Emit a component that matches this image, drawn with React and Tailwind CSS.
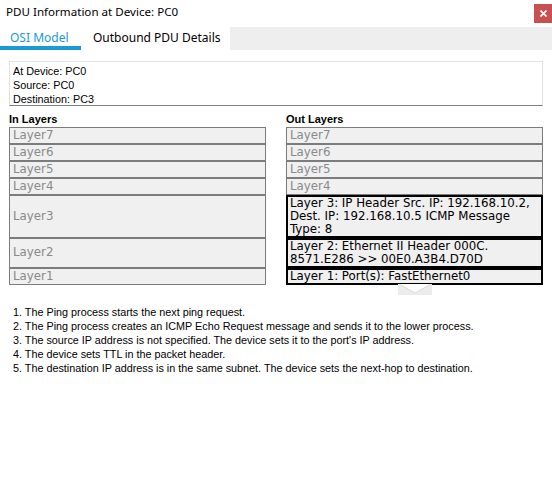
import React from 'react';

const inLayers = [
  { label: 'Layer7', h: 'h-[17px]' },
  { label: 'Layer6', h: 'h-[17px]' },
  { label: 'Layer5', h: 'h-[17px]' },
  { label: 'Layer4', h: 'h-[17px]' },
  { label: 'Layer3', h: 'h-[43px]' },
  { label: 'Layer2', h: 'h-[30px]' },
  { label: 'Layer1', h: 'h-[17px]' },
];

const outLayers = [
  { label: 'Layer7', h: 'h-[17px]' },
  { label: 'Layer6', h: 'h-[17px]' },
  { label: 'Layer5', h: 'h-[17px]' },
  { label: 'Layer4', h: 'h-[17px]' },
  { label: 'Layer 3: IP Header Src. IP: 192.168.10.2, Dest. IP: 192.168.10.5 ICMP Message Type: 8', h: 'h-[43px]', active: true },
  { label: 'Layer 2: Ethernet II Header 000C. 8571.E286 >> 00E0.A3B4.D70D', h: 'h-[30px]', active: true },
  { label: 'Layer 1: Port(s): FastEthernet0', h: 'h-[17px]', active: true },
];

const steps = [
  'The Ping process starts the next ping request.',
  'The Ping process creates an ICMP Echo Request message and sends it to the lower process.',
  "The source IP address is not specified. The device sets it to the port's IP address.",
  'The device sets TTL in the packet header.',
  'The destination IP address is in the same subnet. The device sets the next-hop to destination.',
];

const LayerBox = ({ layer }) => {
  if (layer.active) {
    return (
      <div className={`${layer.h} border-2 border-black bg-[#f0f0f0] px-[2px] text-black leading-[13px] flex items-center`}>
        <span>{layer.label}</span>
      </div>
    );
  }
  return (
    <div className={`${layer.h} border border-[#7c7c7c] bg-[#f0f0f0] px-[3px] text-[#8a8a8a] flex items-center`}>
      {layer.label}
    </div>
  );
};

const Column = ({ title, layers, children }) => (
  <div className="w-[257px] flex flex-col">
    <div className="font-['Liberation_Sans',Arial,sans-serif] font-bold text-[11px] leading-[13px] text-black mb-[1px]">
      {title}
    </div>
    <div className="flex flex-col font-['DejaVu_Sans',Verdana,sans-serif] text-[11.8px]">
      {layers.map((l, i) => (
        <LayerBox key={i} layer={l} />
      ))}
    </div>
    {children}
  </div>
);

export default function App() {
  return (
    <div className="w-[552px] h-[494px] bg-white relative overflow-hidden">
      {/* title bar */}
      <div className="h-[27px] flex justify-between items-start">
        <div className="pl-[6px] pt-[4px] font-['Noto_Sans',sans-serif] text-[11.6px] leading-[16px] text-black">
          PDU Information at Device: PC0
        </div>
        <button className="mt-[4px] w-[18px] h-[19px] bg-[#c75050] text-white flex items-center justify-center">
          <svg width="7" height="7" viewBox="0 0 7 7">
            <path d="M0.5 0.5 L6.5 6.5 M6.5 0.5 L0.5 6.5" stroke="white" strokeWidth="1.6" />
          </svg>
        </button>
      </div>

      {/* tabs */}
      <div className="h-[23px] flex font-['Noto_Sans',sans-serif] text-[12px]">
        <div className="w-[81px] border-b-4 border-[#1a9ad6] text-[#1a9ad6] pl-[10px] pt-[2px]">OSI Model</div>
        <div className="w-[149px] pl-[12px] pt-[2px] text-black">Outbound PDU Details</div>
        <div className="flex-1 bg-[#eeeeee]"></div>
      </div>

      <div className="px-[9px] pt-[11px]">
        {/* info box */}
        <div className="w-[534px] h-[45px] border border-[#e2e2e2] border-b-[#808080] px-[3px] pt-[2px] font-['Liberation_Sans',Arial,sans-serif] text-[10.8px] leading-[14px] text-black">
          <div>At Device: PC0</div>
          <div>Source: PC0</div>
          <div>Destination: PC3</div>
        </div>

        {/* layers */}
        <div className="flex gap-[20px] mt-[7px]">
          <Column title="In Layers" layers={inLayers} />
          <Column title="Out Layers" layers={outLayers}>
            <div className="flex justify-center -mt-px">
              <svg width="34" height="11" viewBox="0 0 34 11">
                <rect x="0" y="0" width="34" height="11" fill="#ececec" />
                <polygon points="1,0 17,9 33,0" fill="#ffffff" />
                <polyline points="1,0 17,9 33,0" fill="none" stroke="#dadada" strokeWidth="1" />
              </svg>
            </div>
          </Column>
        </div>

        {/* steps */}
        <div className="mt-[10px] pl-[4px] font-['Liberation_Sans',Arial,sans-serif] text-[10.8px] leading-[14px] text-black">
          {steps.map((s, i) => (
            <div key={i}>{i + 1}. {s}</div>
          ))}
        </div>
      </div>
    </div>
  );
}
